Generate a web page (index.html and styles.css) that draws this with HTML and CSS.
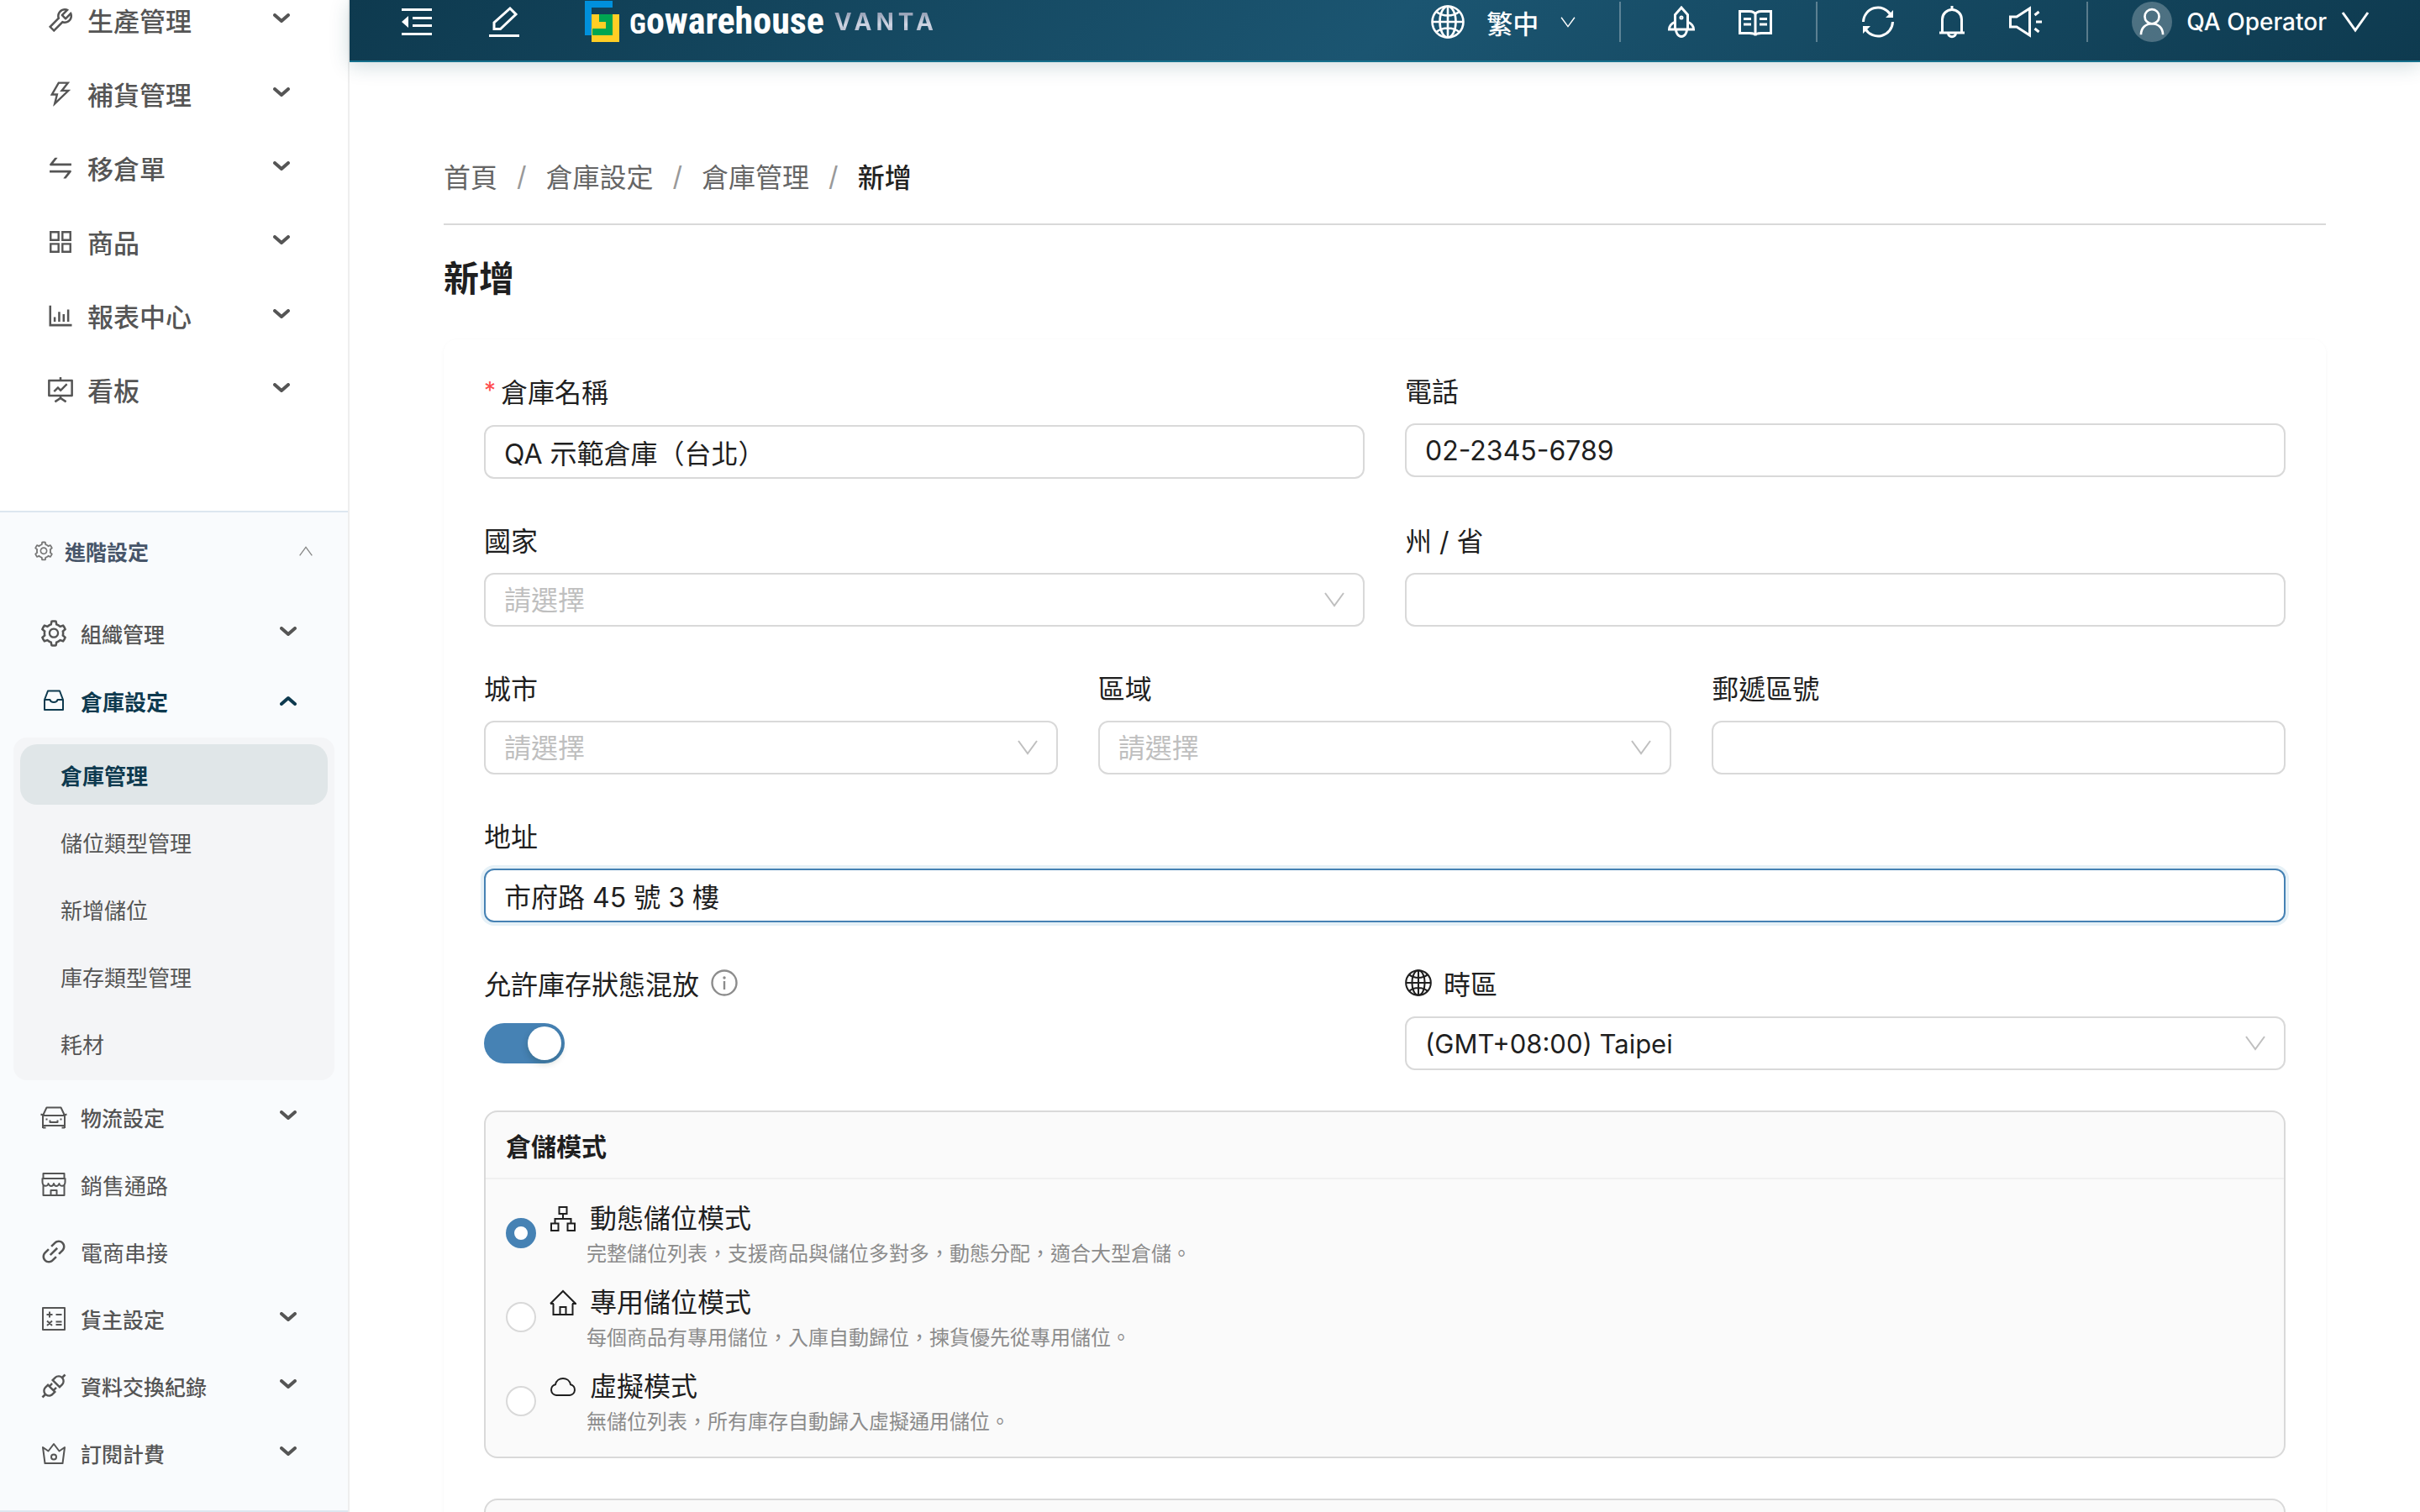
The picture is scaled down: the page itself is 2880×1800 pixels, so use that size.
FILE: index.html
```html
<!DOCTYPE html>
<html lang="zh-Hant">
<head>
<meta charset="utf-8">
<meta name="viewport" content="width=device-width, initial-scale=1">
<title>新增 - 倉庫管理</title>
<link rel="stylesheet" href="styles.css">
</head>
<body>
<svg class="sprite" aria-hidden="true">
  <symbol id="chevron" viewBox="0 0 20 12"><path d="M2 2l8 7 8-7" fill="none" stroke="currentColor" stroke-width="4" stroke-linecap="round" stroke-linejoin="round"/></symbol>
  <symbol id="caret" viewBox="0 0 24 18"><path d="M1 1l11 15L23 1" fill="none" stroke="currentColor" stroke-width="2"/></symbol>
  <symbol id="gear" viewBox="0 0 1024 1024"><path d="M924.800 625.700l-65.500-56c3.100-19 4.700-38.400 4.700-57.800s-1.600-38.800-4.700-57.800l65.500-56a32.030 32.030 0 009.300-35.200l-.9-2.600a443.740 443.740 0 00-79.700-137.900l-1.800-2.100a32.120 32.120 0 00-35.100-9.500l-81.300 28.900c-30-24.600-63.500-44-99.700-57.600l-15.700-85a32.050 32.050 0 00-25.800-25.700l-2.700-.5c-52.100-9.400-106.900-9.400-159 0l-2.700.5a32.050 32.050 0 00-25.800 25.700l-15.800 85.400a351.860 351.860 0 00-99 57.400l-81.900-29.100a32 32 0 00-35.100 9.500l-1.800 2.100a446.020 446.020 0 00-79.700 137.900l-.9 2.600c-4.500 12.500-.8 26.500 9.300 35.200l66.300 56.600c-3.100 18.800-4.600 38-4.600 57.100 0 19.200 1.500 38.400 4.600 57.100L99 625.500a32.030 32.030 0 00-9.300 35.200l.9 2.600c18.100 50.400 44.900 96.900 79.700 137.900l1.800 2.100a32.120 32.120 0 0035.100 9.500l81.900-29.100c29.800 24.500 63.100 43.900 99 57.400l15.800 85.400a32.050 32.050 0 0025.800 25.700l2.700.5a449.400 449.400 0 00159 0l2.700-.5a32.050 32.050 0 0025.800-25.700l15.700-85a350 350 0 0099.700-57.600l81.300 28.900a32 32 0 0035.100-9.500l1.800-2.100c34.800-41.100 61.600-87.500 79.700-137.900l.9-2.600c4.500-12.300.8-26.300-9.300-35zM788.300 465.900c2.500 15.100 3.800 30.600 3.800 46.100s-1.300 31-3.800 46.100l-6.600 40.100 74.700 63.900a370.030 370.030 0 01-42.600 73.600L721 702.800l-31.400 25.800c-23.900 19.600-50.500 35-79.300 45.800l-38.100 14.300-17.900 97a377.500 377.500 0 01-85 0l-17.900-97.200-37.800-14.500c-28.500-10.800-55-26.200-78.700-45.700l-31.400-25.900-93.400 33.200c-17-22.900-31.200-47.600-42.600-73.600l75.500-64.500-6.500-40c-2.400-14.900-3.700-30.300-3.700-45.500 0-15.300 1.200-30.600 3.700-45.500l6.500-40-75.500-64.500c11.300-26.100 25.600-50.700 42.600-73.600l93.400 33.200 31.400-25.900c23.700-19.500 50.200-34.900 78.700-45.700l37.900-14.300 17.900-97.200c28.100-3.200 56.800-3.200 85 0l17.900 97 38.100 14.300c28.700 10.800 55.400 26.200 79.300 45.800l31.400 25.800 92.800-32.900c17 22.900 31.200 47.600 42.600 73.600L781.800 426l6.500 39.900zM512 326c-97.200 0-176 78.800-176 176s78.800 176 176 176 176-78.800 176-176-78.800-176-176-176zm79.200 255.200A111.600 111.600 0 01512 614c-29.900 0-58-11.700-79.200-32.800A111.600 111.600 0 01400 502c0-29.900 11.700-58 32.800-79.200C454 401.600 482.100 390 512 390c29.900 0 58 11.600 79.200 32.800A111.600 111.600 0 01624 502c0 29.900-11.700 58-32.800 79.200z" fill="currentColor"/></symbol>
  <symbol id="globe" viewBox="0 0 40 40"><g fill="none" stroke="currentColor" stroke-width="2.600"><circle cx="20" cy="20" r="18.500"/><ellipse cx="20" cy="20" rx="9.500" ry="18.500"/><path d="M20 1.500v37M1.500 20h37M6.500 8c7.500 6 19.500 6 27 0M6.500 32c7.500-6 19.500-6 27 0"/></g></symbol>
</svg>

<div class="app">
  <aside class="sidebar">
    <nav class="menu" aria-label="主選單">
      <a class="menu-item" href="#"><svg class="icon" viewBox="0 0 1024 1024"><path d="M876.600 239.500c-.5-.9-1.200-1.800-2-2.500-5-5-13.100-5-18.100 0L684.200 409.300l-67.900-67.900L788.700 169c.8-.8 1.400-1.600 2-2.500 3.600-6.100 1.600-13.900-4.500-17.500-98.200-58-226.800-44.700-311.300 39.700-67 67-89.200 162-66.500 247.400l-293 293c-3 3-2.800 7.900.3 11l169.700 169.700c3.100 3.100 8.100 3.300 11 .3l292.900-292.900c85.500 22.800 180.500.7 247.600-66.400 84.400-84.500 97.700-213.100 39.700-311.300zM786 499.800c-58.100 58.100-145.300 69.300-214.600 33.600l-8.800 8.800-.1-.1-274 274.100-79.200-79.200 230.100-230.100s0 .1.1.1l52.800-52.800c-35.700-69.300-24.500-156.500 33.600-214.600a184.200 184.200 0 01144-53.500L537 318.900a32.050 32.050 0 000 45.300l124.500 124.500a32.050 32.050 0 0045.300 0l132.800-132.800c3.700 51.800-14.400 104.800-53.600 143.900z"/></svg><span>生產管理</span><svg class="chev"><use href="#chevron"/></svg></a>
      <a class="menu-item" href="#"><svg class="icon" viewBox="0 0 1024 1024"><path d="M848 359.300H627.700L825.800 109c4.100-5.300.4-13-6.300-13H436c-2.800 0-5.500 1.500-6.900 4L170 547.500c-3.100 5.300.7 12 6.900 12h174.400l-89.400 357.600c-1.900 7.800 7.500 13.300 13.300 7.700L853.500 373c5.200-4.900 1.700-13.700-5.500-13.700zM378.200 732.500l60.300-241H281.100l189.600-327.400h224.600L487 427.400h211L378.200 732.500z"/></svg><span>補貨管理</span><svg class="chev"><use href="#chevron"/></svg></a>
      <a class="menu-item" href="#"><svg class="icon" viewBox="0 0 1024 1024"><path d="M847.900 592H152c-4.400 0-8 3.600-8 8v60c0 4.400 3.600 8 8 8h605.200L612.900 851c-4.100 5.200-.4 13 6.300 13h72.500c4.900 0 9.500-2.200 12.600-6.100l168.800-214.100c16.500-21 1.600-51.800-25.200-51.800zM872 356H266.800l144.300-183c4.100-5.200.4-13-6.300-13h-72.500c-4.900 0-9.500 2.200-12.600 6.100L150.900 380.200c-16.500 21-1.600 51.800 25.100 51.800h696c4.400 0 8-3.600 8-8v-60c0-4.400-3.600-8-8-8z"/></svg><span>移倉單</span><svg class="chev"><use href="#chevron"/></svg></a>
      <a class="menu-item" href="#"><svg class="icon" viewBox="0 0 1024 1024"><path fill-rule="evenodd" d="M144 144h336v336H144zM212 212v200h200V212zM544 144h336v336H544zM612 212v200h200V212zM144 544h336v336H144zM212 612v200h200V612zM544 544h336v336H544zM612 612v200h200V612z"/></svg><span>商品</span><svg class="chev"><use href="#chevron"/></svg></a>
      <a class="menu-item" href="#"><svg class="icon" viewBox="0 0 1024 1024"><path d="M896 792H200V160h-72v704h768zM280 552h72v160h-72zM432 376h72v336h-72zM584 454h72v258h-72zM736 296h72v416h-72z"/></svg><span>報表中心</span><svg class="chev"><use href="#chevron"/></svg></a>
      <a class="menu-item" href="#"><svg class="icon" viewBox="0 0 1024 1024"><path d="M312.100 591.500c3.100 3.100 8.200 3.100 11.300 0l101.800-101.800 86.100 86.200c3.100 3.100 8.200 3.100 11.300 0l226.300-226.500c3.100-3.100 3.100-8.200 0-11.300l-36.800-36.800a8.030 8.030 0 00-11.300 0L517 485.300l-86.100-86.200a8.030 8.030 0 00-11.300 0L275.300 543.400a8.030 8.030 0 000 11.300l36.800 36.800zM904 160H548V96c0-4.400-3.600-8-8-8h-56c-4.400 0-8 3.600-8 8v64H120c-17.700 0-32 14.300-32 32v520c0 17.700 14.300 32 32 32h356.400v32L311.600 884.100a7.920 7.920 0 00-2.300 11l30.300 47.200v.1c2.400 3.700 7.400 4.700 11.100 2.300L512 838.900l161.300 105.800c3.700 2.400 8.700 1.400 11.100-2.300v-.1l30.300-47.200a8 8 0 00-2.300-11L548 776.300V744h356c17.700 0 32-14.300 32-32V192c0-17.700-14.300-32-32-32zm-40 512H160V232h704v440z"/></svg><span>看板</span><svg class="chev"><use href="#chevron"/></svg></a>
    </nav>

    <section class="advanced">
      <button class="advanced-head" type="button"><svg class="icon-small"><use href="#gear"/></svg><span>進階設定</span><svg class="caret-up"><use href="#caret"/></svg></button>
      <nav class="submenu" aria-label="進階設定">
        <a class="sub-item" href="#"><svg class="icon"><use href="#gear"/></svg><span>組織管理</span><svg class="chev"><use href="#chevron"/></svg></a>
        <a class="sub-item open" href="#"><svg class="icon line" viewBox="0 0 36 36"><path d="M7 17l4-10.500h14L29 17v12H7zM7 17h6.500c1 4 8 4 9 0H29"/></svg><span>倉庫設定</span><svg class="chev up"><use href="#chevron"/></svg></a>
        <div class="group">
          <a class="leaf current" href="#" aria-current="page">倉庫管理</a>
          <a class="leaf" href="#">儲位類型管理</a>
          <a class="leaf" href="#">新增儲位</a>
          <a class="leaf" href="#">庫存類型管理</a>
          <a class="leaf" href="#">耗材</a>
        </div>
        <a class="sub-item" href="#"><svg class="icon line" viewBox="0 0 36 36"><path d="M5 31v-15L9.500 6.500h17L31 16v15M2.500 14.500l4 1.500h23l4-1.500M5 28h26M5 30.500h3.500M27.500 30.500H31M13.500 21.500V24h9v-2.500M8.500 20.500h2M25.500 20.500h2"/></svg><span>物流設定</span><svg class="chev"><use href="#chevron"/></svg></a>
        <a class="sub-item single" href="#"><svg class="icon line" viewBox="0 0 36 36"><path d="M5.500 11V5h25v6M5.500 19v12h25V19M4.500 11h27v4c0 6-6.500 6-7 2-1.500 4-5.500 4-6.500 0-1 4-5 4-6.500 0-.5 4-7 4-7-2zM14.500 31v-6h7v6"/></svg><span>銷售通路</span></a>
        <a class="sub-item single" href="#"><svg class="icon" viewBox="0 0 1024 1024"><path d="M574 665.400a8.030 8.030 0 00-11.300 0L446.500 781.600c-53.800 53.800-144.600 59.500-204 0-59.500-59.500-53.800-150.200 0-204l116.200-116.200c3.100-3.100 3.100-8.200 0-11.300l-39.800-39.800a8.030 8.030 0 00-11.300 0L191.400 526.500c-84.600 84.600-84.600 221.500 0 306s221.500 84.600 306 0l116.200-116.200c3.100-3.100 3.100-8.200 0-11.300L574 665.400zm258.600-474c-84.600-84.600-221.500-84.600-306 0L410.300 307.600a8.030 8.030 0 000 11.300l39.700 39.700c3.100 3.100 8.200 3.100 11.300 0l116.200-116.200c53.800-53.800 144.600-59.500 204 0 59.500 59.500 53.800 150.200 0 204L665.300 562.600a8.030 8.030 0 000 11.300l39.800 39.800c3.100 3.100 8.200 3.100 11.300 0l116.200-116.200c84.500-84.600 84.500-221.500 0-306.100zM610.100 372.300a8.030 8.030 0 00-11.300 0L372.300 598.700a8.030 8.030 0 000 11.300l39.600 39.600c3.100 3.100 8.200 3.100 11.300 0l226.400-226.400c3.100-3.100 3.100-8.200 0-11.300l-39.500-39.600z"/></svg><span>電商串接</span></a>
        <a class="sub-item" href="#"><svg class="icon line" viewBox="0 0 36 36"><path d="M5 5h26v26H5zM9.500 13h7M13 9.500v7M20.500 13h7M10 20.500l6 5.500M16 20.500l-6 5.500M20.500 21.500h7M20.500 25h7"/></svg><span>貨主設定</span><svg class="chev"><use href="#chevron"/></svg></a>
        <a class="sub-item" href="#"><svg class="icon" viewBox="0 0 1024 1024"><path d="M917.700 148.800l-42.400-42.400c-1.600-1.600-3.600-2.300-5.700-2.300s-4.100.8-5.700 2.300l-76.100 76.100a199.270 199.270 0 00-112.100-34.300c-51.200 0-102.400 19.500-141.500 58.600L432.300 308.700a8.030 8.030 0 000 11.300L704 591.700c1.600 1.600 3.600 2.300 5.700 2.300 2 0 4.100-.8 5.700-2.300l101.900-101.900c68.900-69 77-175.700 24.300-253.500l76.100-76.100c3.100-3.200 3.100-8.300 0-11.400zM769.100 441.700l-59.400 59.400-186.800-186.800 59.400-59.400c24.900-24.900 58.100-38.700 93.400-38.700 35.300 0 68.400 13.700 93.400 38.700 24.900 24.900 38.700 58.100 38.700 93.400 0 35.300-13.800 68.400-38.700 93.400zm-190.200 105a8.030 8.030 0 00-11.300 0L501 613.300 410.700 523l66.700-66.700c3.100-3.100 3.100-8.200 0-11.300L441 408.600a8.030 8.030 0 00-11.300 0L363 475.300l-43-43a7.850 7.850 0 00-5.700-2.300c-2 0-4.100.8-5.700 2.300L206.800 534.200c-68.900 69-77 175.700-24.300 253.500l-76.100 76.100a8.030 8.030 0 000 11.300l42.400 42.400c1.600 1.600 3.600 2.300 5.700 2.300s4.100-.8 5.700-2.300l76.100-76.100c33.700 22.900 72.900 34.300 112.100 34.300 51.200 0 102.400-19.500 141.500-58.600l101.900-101.900c3.100-3.100 3.100-8.200 0-11.300l-43-43 66.700-66.700c3.100-3.100 3.100-8.200 0-11.300l-36.600-36.200zM441.700 769.100a131.320 131.320 0 01-93.400 38.700c-35.300 0-68.400-13.700-93.400-38.700a131.320 131.320 0 01-38.700-93.400c0-35.300 13.700-68.400 38.700-93.400l59.400-59.400 186.800 186.800-59.400 59.400z"/></svg><span>資料交換紀錄</span><svg class="chev"><use href="#chevron"/></svg></a>
        <a class="sub-item" href="#"><svg class="icon line" viewBox="0 0 36 36"><path d="M5 11l6.500 4.500L18 7l6.500 8.500L31 11l-2.500 19h-21z"/><circle cx="18" cy="22.500" r="3"/></svg><span>訂閱計費</span><svg class="chev"><use href="#chevron"/></svg></a>
      </nav>
    </section>
  </aside>

  <div class="page">
    <header class="topbar">
      <div class="top-left">
        <button class="icon-btn" type="button" aria-label="收合選單"><svg viewBox="0 0 36 36"><path d="M0 2h36v3H0zM13 12h23v3H13zM13 21h23v3H13zM0 31h36v3H0zM8 11v14L0 18z" fill="currentColor"/></svg></button>
        <button class="icon-btn" type="button" aria-label="編輯"><svg viewBox="0 0 36 36"><path d="M0 33h36v3H0z" fill="currentColor"/><path d="M6 26.500V19L25 2l7 7-18.500 17.500z" fill="none" stroke="currentColor" stroke-width="3"/></svg></button>
        <a class="brand" href="#">
          <svg class="brand-mark" viewBox="0 0 41 50" aria-hidden="true"><path d="M0 0h33v8H8v33H0z" fill="#0090dc"/><path d="M8 16h33v33H8z" fill="#ffce25"/><path d="M17 16h16v25H9v-8h16v-8h-8z" fill="#00a651"/></svg>
          <span class="brand-name">Gowarehouse</span>
          <span class="brand-tier">VANTA</span>
        </a>
      </div>
      <div class="top-right">
        <button class="lang" type="button"><svg class="glyph"><use href="#globe"/></svg><span>繁中</span><svg class="caret-tiny"><use href="#caret"/></svg></button>
        <span class="divider"></span>
        <div class="tools">
          <button class="icon-btn" type="button" aria-label="快速開始"><svg class="glyph stroke" viewBox="0 0 40 40"><path d="M12.500 29V11.500L20 3l7.500 8.500V29zM12.500 20C8 22 5.500 25 5.500 29h29c0-4-2.500-7-7-9M13.500 29c0 4 2.500 8.500 6.500 8.500s6.500-4.500 6.500-8.500"/><circle cx="20" cy="15" r="1"/></svg></button>
          <button class="icon-btn" type="button" aria-label="說明文件"><svg class="glyph stroke" viewBox="0 0 40 40"><path d="M1.500 7.500H13c4 0 7 2 7 4 0-2 3-4 7-4h11.500v26H27c-4 0-7 1-7 3 0-2-3-3-7-3H1.500zM20 11v25M6 16.500h9M6 23h9M25 16.500h9M25 23h9"/></svg></button>
        </div>
        <span class="divider"></span>
        <div class="tools">
          <button class="icon-btn" type="button" aria-label="重新整理"><svg class="glyph stroke" viewBox="0 0 40 40"><path d="M2.500 20A17.500 17.500 0 0135 11.500M37.500 20A17.500 17.500 0 015 28.500"/><path d="M38 6v9h-9zM2 34v-9h9z" fill="currentColor" stroke="none"/></svg></button>
          <button class="icon-btn" type="button" aria-label="通知"><svg class="glyph stroke" viewBox="0 0 40 40"><path d="M8.500 32.500V17a11.500 11.500 0 0123 0v15.500M5 33h30M20 1v5M15.500 33.500c0 5.500 9 5.500 9 0"/></svg></button>
          <button class="icon-btn" type="button" aria-label="公告"><svg class="glyph stroke" viewBox="0 0 40 40"><path d="M1.500 14H9L24.500 4v32L9 26H1.500zM32 20h7M30.500 12l5-4M30.500 28l5 4"/></svg></button>
        </div>
        <span class="divider"></span>
        <button class="user" type="button"><span class="avatar"><svg class="glyph stroke" viewBox="0 0 40 40"><circle cx="20" cy="13" r="9.500"/><path d="M5.500 37c0-9 6-14.500 14.500-14.500S34.500 28 34.500 37"/></svg></span><span>QA Operator</span><svg class="caret-big" viewBox="0 0 34 26"><path d="M2 2l15 21L32 2" fill="none" stroke="currentColor" stroke-width="3"/></svg></button>
      </div>
    </header>

    <main class="content">
      <nav class="crumbs" aria-label="導覽路徑">
        <a href="#">首頁</a><span class="sep">/</span><a href="#">倉庫設定</a><span class="sep">/</span><a href="#">倉庫管理</a><span class="sep">/</span><span class="here">新增</span>
      </nav>
      <h1>新增</h1>
      <form class="card">
        <div class="row two">
          <div class="field"><label class="required" for="name">倉庫名稱</label><input class="control" id="name" type="text" value="QA 示範倉庫（台北）" required></div>
          <div class="field"><label for="phone">電話</label><input class="control" id="phone" type="text" value="02-2345-6789"></div>
        </div>
        <div class="row two">
          <div class="field"><label for="country">國家</label><div class="select"><select class="control empty" id="country"><option>請選擇</option></select><svg class="caret"><use href="#caret"/></svg></div></div>
          <div class="field"><label for="state">州 / 省</label><input class="control" id="state" type="text"></div>
        </div>
        <div class="row three">
          <div class="field"><label for="city">城市</label><div class="select"><select class="control empty" id="city"><option>請選擇</option></select><svg class="caret"><use href="#caret"/></svg></div></div>
          <div class="field"><label for="district">區域</label><div class="select"><select class="control empty" id="district"><option>請選擇</option></select><svg class="caret"><use href="#caret"/></svg></div></div>
          <div class="field"><label for="zip">郵遞區號</label><input class="control" id="zip" type="text"></div>
        </div>
        <div class="row">
          <div class="field"><label for="address">地址</label><input class="control active" id="address" type="text" value="市府路 45 號 3 樓"></div>
        </div>
        <div class="row two last">
          <div class="field"><label for="mixed">允許庫存狀態混放<svg class="info" viewBox="0 0 32 32"><circle cx="16" cy="16" r="14.500" fill="none" stroke="currentColor" stroke-width="2.400"/><path d="M14.800 14h2.400v10h-2.400z" fill="currentColor"/><circle cx="16" cy="10" r="1.700" fill="currentColor"/></svg></label><div class="switch-box"><input class="switch" id="mixed" type="checkbox" role="switch" checked></div></div>
          <div class="field"><label for="tz"><svg class="tz-icon"><use href="#globe"/></svg>時區</label><div class="select"><select class="control latin" id="tz"><option>(GMT+08:00) Taipei</option></select><svg class="caret"><use href="#caret"/></svg></div></div>
        </div>

        <section class="panel">
          <h2>倉儲模式</h2>
          <div class="modes">
            <label class="mode"><input type="radio" name="mode" checked><span class="mode-text"><span class="mode-title"><svg viewBox="0 0 32 32"><path d="M11.500 2h9v8h-9zM2 21.500h8.500V30H2zM21.500 21.500H30V30h-8.500zM16 10v6M6.500 21.500V16h19v5.500"/></svg>動態儲位模式</span><span class="mode-desc">完整儲位列表，支援商品與儲位多對多，動態分配，適合大型倉儲。</span></span></label>
            <label class="mode"><input type="radio" name="mode"><span class="mode-text"><span class="mode-title"><svg viewBox="0 0 32 32"><path d="M4.500 17v13h23V17M1 17L16 2l15 15h-4M1 17h4M12.500 30v-9h7v9"/></svg>專用儲位模式</span><span class="mode-desc">每個商品有專用儲位，入庫自動歸位，揀貨優先從專用儲位。</span></span></label>
            <label class="mode"><input type="radio" name="mode"><span class="mode-text"><span class="mode-title"><svg viewBox="0 0 32 32"><path d="M8 26a6.500 6.500 0 01-1-12.800C9 3.500 23 3.500 25 13.200A6.500 6.500 0 0124 26z"/></svg>虛擬模式</span><span class="mode-desc">無儲位列表，所有庫存自動歸入虛擬通用儲位。</span></span></label>
          </div>
        </section>
        <section class="panel next"></section>
      </form>
    </main>
  </div>
</div>
</body>
</html>
```
FILE: styles.css
```css
* { box-sizing: border-box; }
body {
  margin: 0;
  background: #fff;
  color: #1f1f1f;
  font-family: Inter, "Noto Sans CJK TC", sans-serif;
  font-size: 32px;
}
a { color: inherit; text-decoration: none; }
button { border: 0; padding: 0; background: none; color: inherit; font: inherit; cursor: pointer; }
svg { display: block; flex: none; }
.sprite { display: none; }

.app {
  display: grid;
  grid-template-columns: 416px minmax(0, 1fr);
  grid-template-rows: minmax(0, 1fr);
  height: 100vh;
  overflow: hidden;
}

/* Sidebar */
.sidebar {
  display: flex;
  flex-direction: column;
  justify-content: space-between;
  border-right: 2px solid #eee;
  color: #555;
}
.menu { display: flex; flex-direction: column; gap: 40px; padding: 0 69px 0 54px; }
.menu-item, .sub-item { display: flex; align-items: center; gap: 14px; font-weight: 500; }
.menu-item { height: 48px; font-size: 31px; }
.menu-item span { padding-bottom: 2px; }
.icon { width: 36px; height: 36px; fill: currentColor; }
.icon.line { fill: none; stroke: currentColor; stroke-width: 2; stroke-linejoin: round; }
.chev { width: 20px; height: 12px; margin-left: auto; margin-bottom: 4px; }
.chev.up { transform: rotate(180deg); margin-bottom: 0; }
.advanced { background: #f9fbfd; border-top: 2px solid #dde7f0; border-bottom: 2px solid #dde7f0; }
.advanced-head {
  display: flex;
  align-items: center;
  gap: 12px;
  width: 100%;
  height: 92px;
  padding: 0 42px 0 39px;
  color: #475569;
  font-size: 25px;
  font-weight: 700;
}
.icon-small { width: 26px; height: 26px; color: #777; }
.caret-up { width: 16px; height: 12px; margin-left: auto; color: #888; transform: rotate(180deg); }
.submenu { display: flex; flex-direction: column; gap: 8px; padding: 16px 16px 32px; }
.sub-item { height: 72px; padding: 0 45px 0 30px; font-size: 25px; }
.sub-item.single { font-size: 26px; font-weight: 400; }
.sub-item.open { color: #0e3a4f; font-size: 26px; font-weight: 700; }
.group { display: flex; flex-direction: column; gap: 8px; padding: 8px; border-radius: 16px; background: #f4f5f7; }
.leaf { display: flex; align-items: center; height: 72px; padding: 0 48px; border-radius: 20px; font-size: 26px; }
.leaf.current { background: #e0e6e8; color: #0e3a4f; font-weight: 700; }

/* Top bar */
.page { display: flex; flex-direction: column; min-width: 0; }
.topbar {
  position: relative;
  z-index: 1;
  display: flex;
  flex: none;
  justify-content: space-between;
  padding: 0 60px 20px 62px;
  border-bottom: 2px solid #15708c;
  background: linear-gradient(135deg, #0e3a4f 0%, #1b5571 50%, #0e3a4f 100%) border-box;
  box-shadow: 0 4px 24px rgba(14, 70, 79, 0.2);
  color: #fff;
}
.top-left, .top-right, .tools, .lang, .user, .brand { display: flex; align-items: center; }
.top-left, .top-right { height: 52px; }
.top-left { gap: 68px; }
.top-left .icon-btn svg { width: 36px; height: 36px; }
.brand { margin-left: 10px; gap: 12px; }
.brand-mark { width: 41px; height: 50px; }
.brand-name { font-family: "Liberation Sans Narrow", "Roboto Condensed", "Liberation Sans", sans-serif; font-size: 44px; font-weight: 700; line-height: 52px; }
.brand-name::first-letter { font-size: 34px; }
.brand-tier {
  font-size: 28px;
  font-weight: 700;
  line-height: 32px;
  letter-spacing: 5px;
  background: linear-gradient(#7f8ba3, #cfd6e4 60%, #a3aec2);
  background-clip: text;
  color: transparent;
}
.top-right { gap: 52px; }
.tools { gap: 48px; }
.glyph { width: 40px; height: 40px; }
.stroke { fill: none; stroke: currentColor; stroke-width: 3; }
.divider { width: 2px; height: 48px; background: rgba(255, 255, 255, 0.3); }
.lang { gap: 26px; font-size: 31px; font-weight: 500; }
.caret-tiny { width: 18px; height: 13px; }
.user { gap: 17px; font-size: 28px; font-weight: 500; }
.avatar { display: grid; place-items: center; width: 48px; height: 48px; border-radius: 50%; background: rgba(255, 255, 255, 0.25); }
.avatar .glyph { width: 36px; height: 36px; }
.caret-big { width: 34px; height: 26px; }

/* Page content */
.content { display: flex; flex-direction: column; padding: 112px 112px 0; }
.crumbs { display: flex; flex: none; align-items: center; gap: 23px; height: 156px; margin-top: -74px; padding: 74px 0 34px; border-bottom: 2px solid #d9d9d9; color: #666; }
.crumbs .sep { color: #999; }
.crumbs .here { color: #222; font-weight: 500; }
h1 { margin: 32px 0 40px; font-size: 42px; font-weight: 700; line-height: 64px; }
.card { flex: none; padding: 40px 48px; border-radius: 16px; box-shadow: 0 1px 4px rgba(0, 0, 0, 0.04); }
.row { display: grid; gap: 48px; margin-bottom: 52px; }
.row.two { grid-template-columns: 1fr 1fr; }
.row.three { grid-template-columns: 1fr 1fr 1fr; }
.row.last { margin-bottom: 48px; }
.field { display: flex; flex-direction: column; gap: 20px; min-width: 0; }
.field label { display: flex; align-items: center; gap: 14px; height: 40px; }
.field label.required { gap: 6px; height: 42px; }
.required::before { content: "*"; color: #ff4d4f; font-size: 28px; }
.info, .tz-icon { width: 32px; height: 32px; }
.info { color: #8c8c8c; }
.control {
  width: 100%;
  height: 64px;
  margin: 0;
  padding: 0 22px;
  border: 2px solid #d9d9d9;
  border-radius: 12px;
  outline: 0;
  background: #fff;
  color: #1f1f1f;
  font: inherit;
  appearance: none;
}
.control.latin { font-size: 31px; }
.control.empty { color: #bfbfbf; }
.control.active { border-color: #4682b4; box-shadow: 0 0 0 4px #e6f1f7; }
.select { display: grid; align-items: center; }
.select > * { grid-area: 1 / 1; }
.select .caret { width: 24px; height: 18px; margin-right: 24px; justify-self: end; color: #bfbfbf; pointer-events: none; }
.switch-box { display: flex; align-items: center; height: 64px; }
.switch { display: flex; justify-content: flex-end; width: 96px; height: 48px; margin: 0; padding: 4px; border-radius: 24px; background: #4682b4; appearance: none; }
.switch::before { content: ""; width: 40px; height: 40px; border-radius: 50%; background: #fff; box-shadow: 0 4px 8px rgba(0, 35, 11, 0.2); }

.panel { margin-bottom: 48px; border: 2px solid #d9d9d9; border-radius: 16px; background: #fafafa; }
.panel h2 { margin: 0; padding: 4px 24px 0; border-bottom: 2px solid #f0f0f0; font-size: 30px; font-weight: 700; line-height: 74px; }
.panel.next { min-height: 120px; }
.modes { display: flex; flex-direction: column; gap: 16px; padding: 22px 24px 24px; }
.mode { display: flex; align-items: center; gap: 16px; }
.mode input { flex: none; width: 36px; height: 36px; margin: 0; border: 2px solid #d9d9d9; border-radius: 50%; background: #fff; appearance: none; }
.mode input:checked { border: 10px solid #4682b4; }
.mode-text { display: flex; flex-direction: column; }
.mode-title { display: flex; align-items: center; gap: 16px; line-height: 50px; }
.mode-title svg { width: 32px; height: 32px; fill: none; stroke: currentColor; stroke-width: 2; }
.mode-desc { margin-left: 44px; color: #8c8c8c; font-size: 24px; line-height: 34px; }
```
